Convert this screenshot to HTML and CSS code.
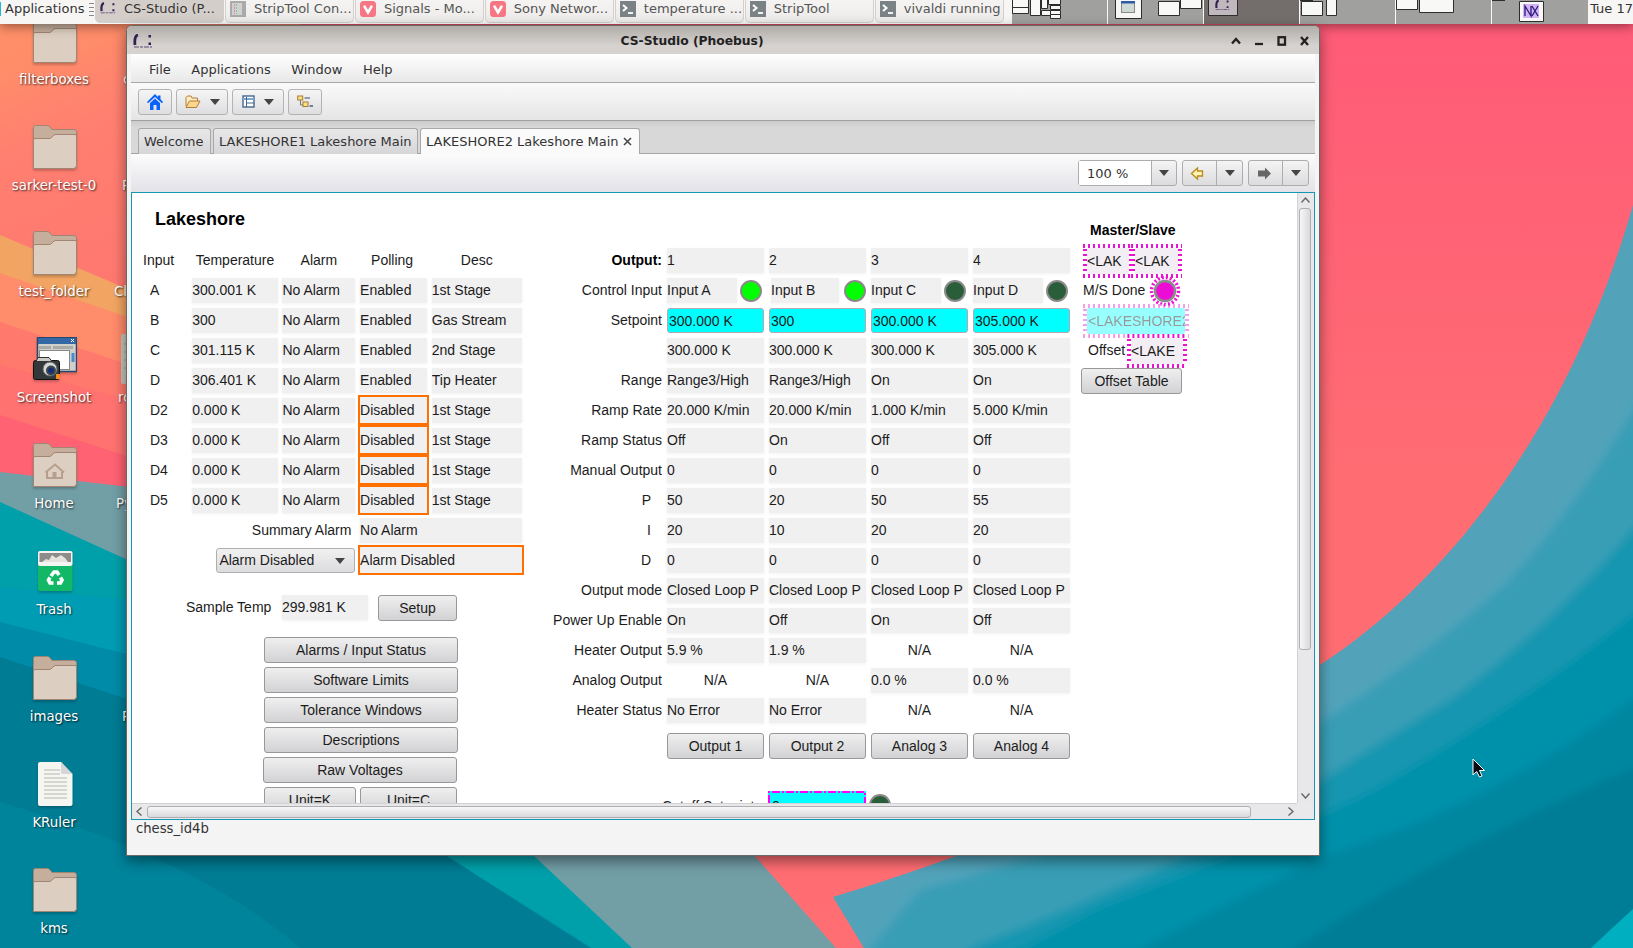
FILE: index.html
```html
<!DOCTYPE html>
<html lang="en">
<head>
<meta charset="utf-8">
<title>CS-Studio (Phoebus)</title>
<link rel="stylesheet" href="styles.css">
</head>
<body>
<svg width="0" height="0" class="defs">
  <defs>
    <linearGradient id="warm" x1="0" y1="0" x2="0.25" y2="1"><stop offset="0" stop-color="#ff9366"/><stop offset=".16" stop-color="#ff8b6a"/><stop offset=".3" stop-color="#ff7f70"/><stop offset=".6" stop-color="#ff7870"/></linearGradient>
    <linearGradient id="pink" x1="0" y1="0" x2="0" y2="1"><stop offset="0" stop-color="#ff5a78"/><stop offset=".5" stop-color="#ff6c72"/><stop offset="1" stop-color="#ff6e72"/></linearGradient>
    <filter id="soft"><feGaussianBlur stdDeviation="4"/></filter>
    <symbol id="folder" viewBox="0 0 44 44">
      <path d="M.5 43.500V2.500Q.5.500 2.500.500H14Q16 .5 17 2L19 4.500H41Q43 4.500 43.500 6.500V41Q43 43.500 41 43.500Z" fill="#c6ae9c" stroke="#a08672"/>
      <path d="M.5 43.500V15Q.5 13.500 2 13.500H16Q18 13.500 19 12L21 10Q22 9.500 23 9.500H42Q43.500 9.500 43.500 11V40.500Q43 43.500 40.500 43.500Z" fill="#dccec0" stroke="#a08672"/>
    </symbol>
    <symbol id="cs" viewBox="0 0 20 14"><path d="M5 1Q1 2 2 11" fill="none" stroke="#33204f" stroke-width="2.800"/><path d="M15.500 1h2.500v2.500h-2.500zM15.500 8.500h2.500v2.500h-2.500z" fill="#33204f"/><path d="M1 13H19" stroke="#5b4a7c" stroke-dasharray="5 1 3 1"/></symbol>
    <symbol id="viv" viewBox="0 0 16 16"><rect width="16" height="16" rx="3.500" fill="#f67683"/><path d="M4.500 5.500L8 11.500L11.500 5.500" fill="none" stroke="#fff" stroke-width="2.500" stroke-linecap="round"/></symbol>
    <symbol id="term" viewBox="0 0 16 16"><rect width="16" height="16" fill="#7b8286"/><path d="M3 4L6.500 7L3 10" fill="none" stroke="#fff" stroke-width="2"/><path d="M8 12H13" stroke="#fff" stroke-width="1.800"/></symbol>
  </defs>
</svg>
<div class="desktop">
  <svg class="wallpaper" viewBox="0 0 1633 948">
    <rect width="1633" height="948" fill="url(#pink)"/>
    <rect width="300" height="500" fill="url(#warm)"/>
    <path d="M0 235L130 290V345L0 273Z" fill="#f2a563"/>
    <path d="M0 273L130 318V375L0 322Z" fill="#ff8c6a"/>
    <path d="M0 322L130 365V405L0 365Z" fill="#ff7a6c"/>
    <path d="M0 365L130 400V500L0 480Z" fill="#ff7270"/>
    <path d="M0 415L130 457V500L0 480Z" fill="#ff6273"/>
    <path d="M0 472L130 487Q500 560 754 855L836 948H0Z" fill="#729ea6"/>
    <path d="M0 502L130 561Q400 700 533 855L632 948H0Z" fill="#00a0aa"/>
    <path d="M0 587L130 600V800H0Z" fill="#009cb4"/>
    <path d="M0 622L130 655Q300 750 445 855L592 948H0Z" fill="#008ca8"/>
    <path d="M0 657L130 700Q300 760 445 855L590 948H0Z" fill="#007c94"/>
    <path d="M0 802Q200 860 300 948H0Z" fill="#00849c"/>
    <path d="M833 897Q1150 800 1320 665C1420 600 1560 460 1633 205V948H864Z" fill="#52a3ba"/>
    <g filter="url(#soft)">
      <path d="M866 954L920 890Q1150 830 1320 723Q1420 660 1508 582Q1590 490 1645 390V960H866Z" fill="#389eb6"/>
      <path d="M970 948Q1200 860 1320 781Q1400 730 1450 700Q1560 620 1645 515V970H950Z" fill="#1896b0"/>
      <path d="M1000 960L1100 907Q1250 850 1372 791Q1530 700 1645 605V970H1000Z" fill="#0091aa"/>
      <path d="M1110 965Q1250 890 1338 851Q1500 800 1645 690V970Z" fill="#0087a0"/>
      <path d="M1270 965Q1380 890 1500 830T1645 765V970Z" fill="#007d96"/>
    </g>
    <path d="M1591 948Q1612 928 1633 909V948Z" fill="#00afc0"/>
  </svg>

  <div class="icons">
    <div class="icon"><svg width="44" height="44"><use href="#folder"/></svg><span>filterboxes</span></div>
    <div class="icon"><svg width="44" height="44"><use href="#folder"/></svg><span>sarker-test-0</span></div>
    <div class="icon"><svg width="44" height="44"><use href="#folder"/></svg><span>test_folder</span></div>
    <div class="icon"><svg width="44" height="44" viewBox="0 0 44 44"><rect x="4.500" y=".5" width="39" height="34" fill="#cfd0cc" stroke="#25466e" stroke-width="1.500"/><rect x="5" y="1" width="38" height="6" fill="#3468a4"/><path d="M38 2l3 3m0-3l-3 3" stroke="#fff"/><path d="M6 9h12v3H6zM20 9h20v3H20z" fill="#a9aba7"/><rect x="6.500" y="13.500" width="30" height="19" fill="#fff" stroke="#888"/><rect x="38.500" y="16" width="3" height="9" fill="#4a8ad0"/><rect x=".5" y="23.500" width="26" height="19" rx="2" fill="#33383a" stroke="#111"/><path d="M5 20.500h11l3 4H3z" fill="#c9ccca" stroke="#333"/><rect x="23" y="37" width="4" height="5" fill="#f58a1f"/><circle cx="17" cy="32" r="7" fill="#d5d8d6" stroke="#666"/><circle cx="18" cy="33.500" r="5" fill="#3a4650"/><circle cx="18" cy="33.500" r="2.800" fill="#142c78"/></svg><span>Screenshot</span></div>
    <div class="icon"><svg width="44" height="44" viewBox="0 0 44 44"><use href="#folder"/><path d="M14 29V35H29V29M12.500 29.500L22 21.500L31 29.500" fill="none" stroke="#b89f8d" stroke-width="2"/><rect x="19.500" y="29" width="4" height="6" fill="#b89f8d"/></svg><span>Home</span></div>
    <div class="icon"><svg width="44" height="44" viewBox="0 0 44 44"><rect x="5" y="10" width="34.500" height="32" rx="2" fill="#12b866"/><rect x="5" y="2" width="34.500" height="15" rx="2" fill="#f4f4f2"/><rect x="6.500" y="4" width="31.500" height="9" fill="#8d8c8a"/><path d="M9 13l4-3 3 1 3-5 4 3 5-3 4 3 3 4z" fill="#e6e3df"/><g fill="none" stroke="#fff" stroke-width="3.600"><path d="M18 27L21 23H24L26 26"/><path d="M27.500 28.500L29 31L27.500 34H24"/><path d="M20.500 34H17L15.500 31L17 28.500"/></g></svg><span>Trash</span></div>
    <div class="icon"><svg width="44" height="44"><use href="#folder"/></svg><span>images</span></div>
    <div class="icon"><svg width="44" height="44" viewBox="0 0 44 44"><path d="M5 2Q5 0 7 0H28L39.500 12V42Q39.500 44 37.500 44H7Q5 44 5 42Z" fill="#f5f5f2"/><path d="M28 0L39.500 12H30Q27 12 28 9Z" fill="#d6d6d6"/><path d="M11 8H27M11 12H27M11 16H34M11 20H34M11 24H34M11 28H34M11 32H34M11 36H34" stroke="#cbcbc6" stroke-width="1.700"/></svg><span>KRuler</span></div>
    <div class="icon"><svg width="44" height="44"><use href="#folder"/></svg><span>kms</span></div>
  </div>
  <div class="icons2">
    <span class="c">c</span><span class="p">P</span><span class="l">Cl</span><span class="r">ro</span><span class="y">Py</span><span></span><span class="p">P</span>
  </div>
  <svg class="fragment" width="8" height="50"><rect width="20" height="50" rx="2" fill="#c5c4ba"/><path d="M3 10H8M3 18H8M3 26H8M3 34H8" stroke="#9c9c92"/></svg>

  <div class="panel">
    <div class="menu"><i></i>Applications<svg width="5" height="14"><path d="M0 1.500H5M0 5.500H5M0 9.500H5M0 13.500H5" stroke="#888"/></svg></div>
    <div class="task on"><svg width="16" height="14"><use href="#cs"/></svg><span>CS-Studio (P...</span></div>
    <div class="task"><svg width="16" height="16"><rect width="16" height="16" fill="#aaa"/><rect x="2" y="2" width="10" height="12" fill="#cfd2d0"/><path d="M4.500 3V13" stroke="#d8a" stroke-dasharray="2 1"/><path d="M6.500 3V13" stroke="#8c8" stroke-dasharray="2 1"/></svg><span>StripTool Con...</span></div>
    <div class="task"><svg width="16" height="16"><use href="#viv"/></svg><span>Signals - Mo...</span></div>
    <div class="task"><svg width="16" height="16"><use href="#viv"/></svg><span>Sony Networ...</span></div>
    <div class="task"><svg width="16" height="16"><use href="#term"/></svg><span>temperature ...</span></div>
    <div class="task"><svg width="16" height="16"><use href="#term"/></svg><span>StripTool</span></div>
    <div class="task"><svg width="16" height="16"><use href="#term"/></svg><span>vivaldi running</span></div>
    <svg class="pager" width="576" height="24" viewBox="1012 0 576 24">
      <rect x="1012" width="576" height="24" fill="#a0a09e"/><rect x="1204" width="95" height="24" fill="#736e6b"/>
      <path d="M1107.500 0V24M1203.500 0V24M1299.500 0V24M1395.500 0V24M1491.500 0V24" stroke="#fafafa"/>
      <g fill="#f8f8f6" stroke="#2d2d2d">
        <path d="M1012.500-2H1028.500V7.500H1012.500ZM1012.500 7.500H1028.500V13.500H1012.500ZM1030.500-2H1040.500V15.500H1030.500ZM1041.500-2H1047.500V8.500H1041.500ZM1048.500-2H1060.500V4.500H1048.500ZM1050.500 5.500H1060.500V9.500H1050.500ZM1041.500 10.500H1050.500V15.500H1041.500ZM1050.500 10.500H1060.500V14.500H1050.500ZM1050.500 14.500H1060.500V18.500H1050.500Z"/>
        <path d="M1115.500-2H1141.500V18.500H1115.500ZM1180.500-2H1201.500V8.500H1180.500ZM1158.500 1.500H1179.500V15.500H1158.500Z"/>
        <path d="M1208.500-2H1237.500V15.500H1208.500Z" fill="#c0b8bc"/>
        <path d="M1301.500 1.500H1322.500V15.500H1301.500ZM1326.500-2H1336.500V15.500H1326.500ZM1396.500-2H1417.500V9.500H1396.500ZM1419.500-2H1453.500V12.500H1419.500ZM1519.500 1.500H1543.500V21.500H1519.500Z"/>
      </g>
      <path d="M1300 .500H1313M1492 .500H1505" stroke="#2d2d2d"/>
      <rect x="1121.500" y="1.500" width="13" height="11" fill="#cfdad6" stroke="#888"/><rect x="1121" y="1" width="14" height="2.500" fill="#2e5ca8"/>
      <svg x="1215" y="-1" width="15" height="12"><use href="#cs"/></svg>
      <rect x="1523" y="4" width="16" height="14" fill="#d3b2f7"/>
      <path d="M1525 16V6L1531 16V6M1532 6L1538 16M1538 6L1532 16" fill="none" stroke="#2a1a78" stroke-width="1.300"/>
    </svg>
    <div class="clock">Tue 17</div>
  </div>

  <div class="window">
    <div class="title">
      <svg class="logo" width="20" height="14"><use href="#cs"/></svg>
      <b>CS-Studio (Phoebus)</b>
      <svg class="wm" width="80" height="14" viewBox="0 0 80 14"><g fill="none" stroke="#222" stroke-width="2.300"><path d="M3 9.500L7 5L11 9.500"/><path d="M26 10H34"/><rect x="49.500" y="3.200" width="6.500" height="7.500"/><path d="M72 3L79 11M79 3L72 11"/></g></svg>
    </div>
    <div class="menubar"><span>File</span><span>Applications</span><span>Window</span><span>Help</span></div>
    <div class="toolbar">
      <div class="tb w33"><svg width="16" height="16"><path d="M8 0L11 3V1.500H13.500V5.300L16 8L15 9.200L8 3L1 9.200L0 8Z" fill="#0a63fa"/><path d="M3 9L8 4.500L13 9V16H9.500V11H6.500V16H3Z" fill="#0a63fa"/></svg></div>
      <div class="tb w52"><svg width="16" height="14"><path d="M1 11V2.500L2.500 1H6L7 3H12.500V6" fill="#fdebc2" stroke="#b67c36"/><path d="M1 12.500L4.500 6H15L11.500 12.500Z" fill="#fbd78e" stroke="#b67c36"/></svg><i class="dn"></i></div>
      <div class="tb w52"><svg width="13" height="13"><rect x="1" y="1" width="11" height="11" fill="#fff" stroke="#44678e" stroke-width="1.400"/><path d="M1 4H12" stroke="#7ba6d6" stroke-width="2"/><path d="M4.500 2V12M4.500 8H12" stroke="#44678e"/></svg><i class="dn"></i></div>
      <div class="tb w33"><svg width="16" height="13"><path d="M3.500 5V10H8" fill="none" stroke="#777"/><rect x=".7" y="1" width="5" height="4" fill="#fbe08a" stroke="#a87d2c"/><rect x="6" y="7" width="5" height="4.500" fill="#fbe08a" stroke="#a87d2c"/><path d="M7.500 3H13" stroke="#447"/><path d="M12.500 11H16" stroke="#368" stroke-width="1.500"/></svg></div>
    </div>
    <div class="tabs"><span class="tab t1">Welcome</span><span class="tab t2">LAKESHORE1 Lakeshore Main</span><span class="tab t3">LAKESHORE2 Lakeshore Main<svg width="9" height="9"><path d="M1 1L8 8M8 1L1 8" stroke="#444" stroke-width="1.500"/></svg></span></div>
    <div class="subbar">
      <div class="split zoom"><span>100 %</span><i><em class="dn"></em></i></div>
      <div class="split nav"><svg width="34" height="24"><path d="M8.500 12.500L14.500 7V10H19.500V15H14.500V18Z" fill="#fff3b0" stroke="#b98a1c" stroke-width="1.300"/></svg><i><em class="dn"></em></i></div>
      <div class="split nav"><svg width="34" height="24"><path d="M22 12.500L16 6.500V9.500H9V15.500H16V18.500Z" fill="#666"/></svg><i><em class="dn"></em></i></div>
    </div>
    <div class="view">
      <div class="opi">
        <section class="left">
          <h1>Lakeshore</h1>
          <div class="inputs">
            <span class="h first">Input</span><span class="h">Temperature</span><span class="h">Alarm</span><span class="h poll">Polling</span><span class="h">Desc</span>
            <label>A</label><span class="v">300.001 K</span><span class="v">No Alarm</span><span class="v">Enabled</span><span class="v">1st Stage</span>
            <label>B</label><span class="v">300</span><span class="v">No Alarm</span><span class="v">Enabled</span><span class="v">Gas Stream</span>
            <label>C</label><span class="v">301.115 K</span><span class="v">No Alarm</span><span class="v">Enabled</span><span class="v">2nd Stage</span>
            <label>D</label><span class="v">306.401 K</span><span class="v">No Alarm</span><span class="v">Enabled</span><span class="v">Tip Heater</span>
            <label>D2</label><span class="v">0.000 K</span><span class="v">No Alarm</span><span class="v warn">Disabled</span><span class="v">1st Stage</span>
            <label>D3</label><span class="v">0.000 K</span><span class="v">No Alarm</span><span class="v warn">Disabled</span><span class="v">1st Stage</span>
            <label>D4</label><span class="v">0.000 K</span><span class="v">No Alarm</span><span class="v warn">Disabled</span><span class="v">1st Stage</span>
            <label>D5</label><span class="v">0.000 K</span><span class="v">No Alarm</span><span class="v warn">Disabled</span><span class="v">1st Stage</span>
            <span class="sum">Summary Alarm</span><span class="v wide">No Alarm</span>
            <div class="combo">Alarm Disabled<i class="dn"></i></div><span class="v wide warn">Alarm Disabled</span>
          </div>
          <div class="sample"><span>Sample Temp</span><span class="v">299.981 K</span><div class="btn">Setup</div></div>
          <div class="btns"><div class="btn">Alarms / Input Status</div><div class="btn">Software Limits</div><div class="btn">Tolerance Windows</div><div class="btn">Descriptions</div><div class="btn raw">Raw Voltages</div><div class="units"><div class="btn">Unit=K</div><div class="btn">Unit=C</div></div></div>
        </section>
        <section class="mid">
          <div class="outputs">
            <b>Output:</b><span class="v">1</span><span class="v">2</span><span class="v">3</span><span class="v">4</span>
            <label>Control Input</label><div class="ci"><span class="v">Input A</span><i class="led on"></i></div><div class="ci second"><span class="v">Input B</span><i class="led on"></i></div><div class="ci"><span class="v">Input C</span><i class="led"></i></div><div class="ci"><span class="v">Input D</span><i class="led"></i></div>
            <label>Setpoint</label><span class="set">300.000 K</span><span class="set">300</span><span class="set">300.000 K</span><span class="set">305.000 K</span>
            <label></label><span class="v">300.000 K</span><span class="v">300.000 K</span><span class="v">300.000 K</span><span class="v">305.000 K</span>
            <label>Range</label><span class="v">Range3/High</span><span class="v">Range3/High</span><span class="v">On</span><span class="v">On</span>
            <label>Ramp Rate</label><span class="v">20.000 K/min</span><span class="v">20.000 K/min</span><span class="v">1.000 K/min</span><span class="v">5.000 K/min</span>
            <label>Ramp Status</label><span class="v">Off</span><span class="v">On</span><span class="v">Off</span><span class="v">Off</span>
            <label>Manual Output</label><span class="v">0</span><span class="v">0</span><span class="v">0</span><span class="v">0</span>
            <label class="pid">P</label><span class="v">50</span><span class="v">20</span><span class="v">50</span><span class="v">55</span>
            <label class="pid">I</label><span class="v">20</span><span class="v">10</span><span class="v">20</span><span class="v">20</span>
            <label class="pid">D</label><span class="v">0</span><span class="v">0</span><span class="v">0</span><span class="v">0</span>
            <label>Output mode</label><span class="v">Closed Loop P</span><span class="v">Closed Loop P</span><span class="v">Closed Loop P</span><span class="v">Closed Loop P</span>
            <label>Power Up Enable</label><span class="v">On</span><span class="v">Off</span><span class="v">On</span><span class="v">Off</span>
            <label>Heater Output</label><span class="v">5.9 %</span><span class="v">1.9 %</span><span class="na">N/A</span><span class="na">N/A</span>
            <label>Analog Output</label><span class="na">N/A</span><span class="na">N/A</span><span class="v">0.0 %</span><span class="v">0.0 %</span>
            <label>Heater Status</label><span class="v">No Error</span><span class="v">No Error</span><span class="na">N/A</span><span class="na">N/A</span>
          </div>
          <div class="outbtns"><div class="btn">Output 1</div><div class="btn">Output 2</div><div class="btn">Analog 3</div><div class="btn">Analog 4</div></div>
          <div class="cutoff"><span>Cutoff Setpoint</span><div class="cut"><svg width="98" height="12"><path d="M1 12V1H97V12" fill="none" stroke="#f0f" stroke-width="2" stroke-dasharray="8 2 2 2"/></svg><span>0</span></div><i class="led"></i></div>
        </section>
        <section class="right">
          <b>Master/Slave</b>
          <div class="row"><span class="disc a">&lt;LAK</span><span class="disc b">&lt;LAK</span></div>
          <div class="row"><span class="ms">M/S Done</span><svg width="32" height="32"><circle cx="16" cy="16" r="13.500" fill="none" stroke="#ec12d2" stroke-width="3.500" stroke-dasharray="2 2"/><circle cx="16" cy="16" r="10" fill="#ec0cd6" stroke="#8c8c8c" stroke-width="2.500"/></svg></div>
          <div class="row"><span class="disc dim"><span>&lt;LAKESHORE2</span></span></div>
          <div class="row"><span class="off">Offset</span><span class="disc c">&lt;LAKE</span></div>
          <div class="row"><div class="btn ot">Offset Table</div></div>
        </section>
      </div>
      <div class="vs"><svg width="9" height="6"><path d="M.5 5.500L4.500 1L8.500 5.500" fill="none" stroke="#666" stroke-width="1.400"/></svg><div></div><svg width="9" height="6"><path d="M.5.500L4.500 5L8.500.500" fill="none" stroke="#666" stroke-width="1.400"/></svg></div>
      <div class="hs"><svg width="6" height="9"><path d="M5.500.500L1 4.500L5.500 8.500" fill="none" stroke="#666" stroke-width="1.400"/></svg><div></div><svg width="6" height="9"><path d="M.5.500L5 4.500L.5 8.500" fill="none" stroke="#666" stroke-width="1.400"/></svg></div>
    </div>
    <div class="status">chess_id4b</div>
  </div>
  <svg class="cursor" width="13" height="20"><path d="M1 1V17L4.700 13.500L7.500 19L10 18L7.500 12.500H12.500Z" fill="#0a0a14" stroke="#fff"/></svg>
</div>
</body>
</html>
```

FILE: styles.css
```css
* { box-sizing: border-box; }
body { margin: 0; overflow: hidden; font: 13.33px "DejaVu Sans", sans-serif; color: #333; }
i, em { font-style: normal; }
.defs { position: absolute; }
.desktop { position: relative; width: 1633px; height: 948px; overflow: hidden; }
.wallpaper { position: absolute; left: 0; top: 0; width: 1633px; height: 948px; }

/* desktop icons */
.icons { position: absolute; left: 0; top: 19px; width: 108px; }
.icon { height: 106.1px; display: flex; flex-direction: column; align-items: center; }
.icon svg { flex: none; margin-left: 2px; filter: drop-shadow(0 2px 1px rgba(0,0,0,.2)); }
.icon span, .icons2 span { color: #fff; line-height: 18px; text-shadow: 1px 1px 2px rgba(0,0,0,.75); white-space: nowrap; }
.icon span { margin-top: 8px; }
.icons2 { position: absolute; left: 114px; top: 71px; display: flex; flex-direction: column; }
.icons2 span { height: 106.1px; }
.icons2 .c { padding-left: 9px; }
.icons2 .p { padding-left: 8px; }
.icons2 .r { padding-left: 4px; }
.icons2 .y { padding-left: 2px; }
.fragment { position: absolute; left: 121px; top: 334px; }

/* top panel */
.panel { position: relative; display: flex; height: 24px; background: #f7f6f5; box-shadow: 0 2px 12px rgba(0,0,0,.45); color: #555; font-size: 13px; line-height: 17px; }
.menu { width: 95px; display: flex; color: #333; gap: 5px; white-space: nowrap; }
.menu i { width: 1px; margin-right: -1px; margin-top: 2px; height: 14px; background: #1fb7d8; }
.menu svg { flex: none; margin-top: 2px; }
.task { width: 129.500px; height: 23px; margin-right: .5px; padding-left: 4px; display: flex; gap: 8px; border: 1px solid #d3cfcc; border-top: 0; border-radius: 0 0 5px 5px; background: linear-gradient(#f5f4f3, #ecebe9); white-space: nowrap; }
.task svg { flex: none; margin-top: 1px; }
.task.on { background: #d3ceca; color: #333; }
.pager { margin-left: 7.500px; flex: none; }
.clock { padding-left: 2px; color: #333; white-space: nowrap; }

/* window frame */
.window { position: absolute; left: 126px; top: 25px; width: 1194px; height: 831px; padding: 0 4px; border: 1px solid #6c6866; border-radius: 6px 6px 0 0; background: #f4f4f4; box-shadow: 0 5px 14px rgba(0,0,0,.45); font-size: 13px; }
.title { height: 28px; margin: 0 -4px; display: flex; align-items: center; padding: 1px 10px 0 6px; background: linear-gradient(#b0ada9, #d6d2cf 70%); border-radius: 5px 5px 0 0; font-size: 12.3px; color: #222; }
.title b { flex: 1; text-align: center; padding-left: 0; margin-right: -2px; }
.menubar { height: 29px; display: flex; gap: 20.500px; align-items: center; padding: 3px 0 0 18px; background: linear-gradient(#fff, #e9e8e9); border-bottom: 1px solid #a8a8a8; }
.toolbar { height: 38px; display: flex; gap: 4px; align-items: center; padding-left: 7px; background: linear-gradient(#fbfafb, #e6e5e6); border-bottom: 1px solid #a0a0a0; }
.tb { height: 26px; display: flex; align-items: center; justify-content: center; gap: 9px; border: 1px solid #b4b3b4; border-radius: 3px; background: linear-gradient(#f6f5f6, #dedddf); }
.w33 { width: 34px; }
.w52 { width: 52px; }
.dn { width: 0; height: 0; border: 5px solid transparent; border-top: 6px solid #444; border-bottom: 0; }
.tabs { height: 33px; display: flex; gap: 2px; padding: 7px 0 0 7px; background: linear-gradient(#ccc, #d8d8d8 20%); border-bottom: 1px solid #a5a5a5; }
.tab { height: 26px; line-height: 26px; padding-left: 5px; border: 1px solid #a8a8a8; border-bottom: 0; border-radius: 3px 3px 0 0; background: linear-gradient(#e9e8e9, #d6d5d8); white-space: nowrap; }
.t1 { width: 73px; }
.t2 { width: 205px; }
.t3 { width: 220px; background: #fbfafb; }
.tab svg { margin-left: 4px; }
.subbar { height: 38px; display: flex; justify-content: flex-end; gap: 5px; padding: 6px 6px 0 0; background: linear-gradient(#fcfcfc, #e2e2e8); }
.split { height: 26px; display: flex; border: 1px solid #adadad; border-radius: 3px; background: linear-gradient(#f4f4f4, #dcdcde); line-height: 25px; }
.split i { flex: 1; display: flex; align-items: center; justify-content: center; border-left: 1px solid #adadad; }
.zoom { width: 99px; }
.zoom span { width: 72px; padding-left: 8px; background: #fff; }
.nav { width: 61px; }
.nav svg { width: 33px; flex: none; }
.view { height: 628px; display: grid; grid-template: 610px 16px / 1165px 17px; border: 1px solid #1496b4; background: #e9e9ec; }
.status { padding: 0 5px; line-height: 17px; font-size: 13.2px; }

/* scrollbars */
.vs { display: flex; flex-direction: column; align-items: center; padding: 4px 2px 4px 0; background: #e8e8eb; border-left: 1px solid #d2d2d2; }
.vs div { width: 12px; height: 442px; margin: 5px 0 auto; border: 1px solid #adadb2; border-radius: 3px; background: linear-gradient(90deg, #f7f7f7, #d9d9dc); }
.hs { display: flex; align-items: center; padding: 0 3px 0 4px; background: #e8e8eb; border-top: 1px solid #d2d2d2; }
.hs div { height: 12px; width: 1104px; margin: 0 auto 0 5px; border: 1px solid #adadb2; border-radius: 3px; background: linear-gradient(#f7f7f7, #d9d9dc); }

/* Lakeshore display */
.opi { display: flex; overflow: hidden; height: 610px; background: #fff; font: 14px/25px "Liberation Sans", sans-serif; color: #1c1c1c; white-space: nowrap; }
.opi b, .opi h1 { color: #000; }
.v { height: 25px; overflow: hidden; background: #f1f0f1; box-shadow: 0 1px 3px #f3f2f3; }
.btn { height: 26px; line-height: 25px; border: 1px solid #98979a; border-radius: 3px; background: linear-gradient(#efeff0, #d2d1d3); text-align: center; }
.left { width: 400px; flex: none; }
h1 { margin: 14px 0 0 23px; font-size: 18px; line-height: 25px; height: 41px; }
.inputs { display: grid; grid-template-columns: 44.500px 85.500px 73px 67px 90px; grid-auto-rows: 25px; gap: 5px 4.700px; padding-left: 11px; }
.inputs .h { text-align: center; }
.inputs .first { text-align: left; }
.inputs .poll { padding-right: 3px; }
.inputs label { padding-left: 7px; }
.inputs .warn { height: 30px; margin: -3px -2px; line-height: 26px; border: 2px solid #ff7000; box-shadow: none; }
.sum { grid-column: 1 / 4; text-align: right; padding-right: 4px; }
.wide { grid-column: 4 / 6; }
.combo { grid-column: 1 / 4; justify-self: end; width: 139px; display: flex; justify-content: space-between; align-items: center; padding: 0 9px 0 2px; border: 1px solid #b0afb0; border-radius: 3px; background: linear-gradient(#f2f1f2, #dcdbdd); }
.sample { display: flex; padding: 22px 0 0 54px; }
.sample > span:first-child { width: 96px; }
.sample .v { width: 86px; margin-right: 10px; }
.sample .btn { width: 79px; }
.btns { display: grid; grid-auto-rows: 26px; gap: 4px; width: 194px; margin: 16px 0 0 132px; }
.raw { margin: 0 1px 0 -1px; }
.units { display: grid; grid-template-columns: 92px 97px; gap: 4px; }
.mid { width: 551px; flex: none; padding-top: 55px; }
.outputs { display: grid; grid-template-columns: 130px repeat(4, 97px); grid-auto-rows: 25px; gap: 5px; }
.outputs label, .outputs > b { text-align: right; }
.outputs .pid { padding-right: 11px; }
.ci { display: flex; align-items: center; justify-content: space-between; padding-right: 2px; }
.ci .v { width: 70px; }
.ci.second { padding-right: 0; }
.second .v { margin-left: 2px; width: 68px; }
.led { width: 22px; height: 22px; border: 2.500px solid #8a8a8a; border-radius: 50%; background: #2a5d3a; }
.led.on { background: #0f0; }
.set { padding-left: 1px; border: 1px solid #b4a8b4; border-radius: 3px; background: #0ff; line-height: 24px; }
.na { text-align: center; }
.outbtns { display: grid; grid-template-columns: repeat(4, 97px); gap: 5px; margin: 10px 0 0 135px; }
.cutoff { display: flex; margin: 32px 0 0 130px; }
.cutoff > span { width: 106px; padding-top: 3px; }
.cut { position: relative; width: 98px; height: 34px; background: #0ff; padding: 3px 0 0 4px; }
.cut svg { position: absolute; left: 0; top: 0; }
.cutoff .led { margin: 3px 0 0 3px; }
.right { padding-top: 24px; }
.right > b { display: block; padding-left: 7px; height: 31px; line-height: 26px; }
.row { height: 30px; display: flex; align-items: center; padding-bottom: 5px; }
.disc { flex: none; height: 34px; line-height: 26px; border: 4px solid transparent; background:
  repeating-linear-gradient(90deg, #ec12d2 0 2px, #fff 2px 5px) top / 100% 4px no-repeat border-box,
  repeating-linear-gradient(90deg, #ec12d2 0 2px, #fff 2px 5px) bottom / 100% 4px no-repeat border-box,
  repeating-linear-gradient(#ec12d2 0 2px, #fff 2px 5px) left / 4px 100% no-repeat border-box,
  repeating-linear-gradient(#ec12d2 0 2px, #fff 2px 5px) right / 4px 100% no-repeat border-box,
  linear-gradient(#f3eef3, #f3eef3) border-box; }
.a { width: 50px; }
.b { width: 51px; margin-left: -2px; }
.c { width: 60px; }
.dim { width: 106px; opacity: .4; }
.dim > span { display: block; overflow: hidden; height: 26px; background: #0ff; padding-left: 1px; color: #000; border-radius: 3px; }
.ms { width: 66px; }
.off { padding-left: 5px; flex: none; width: 44px; }
.ot { width: 101px; margin-left: -2px; }
.cursor { position: absolute; left: 1472px; top: 758px; }
```
